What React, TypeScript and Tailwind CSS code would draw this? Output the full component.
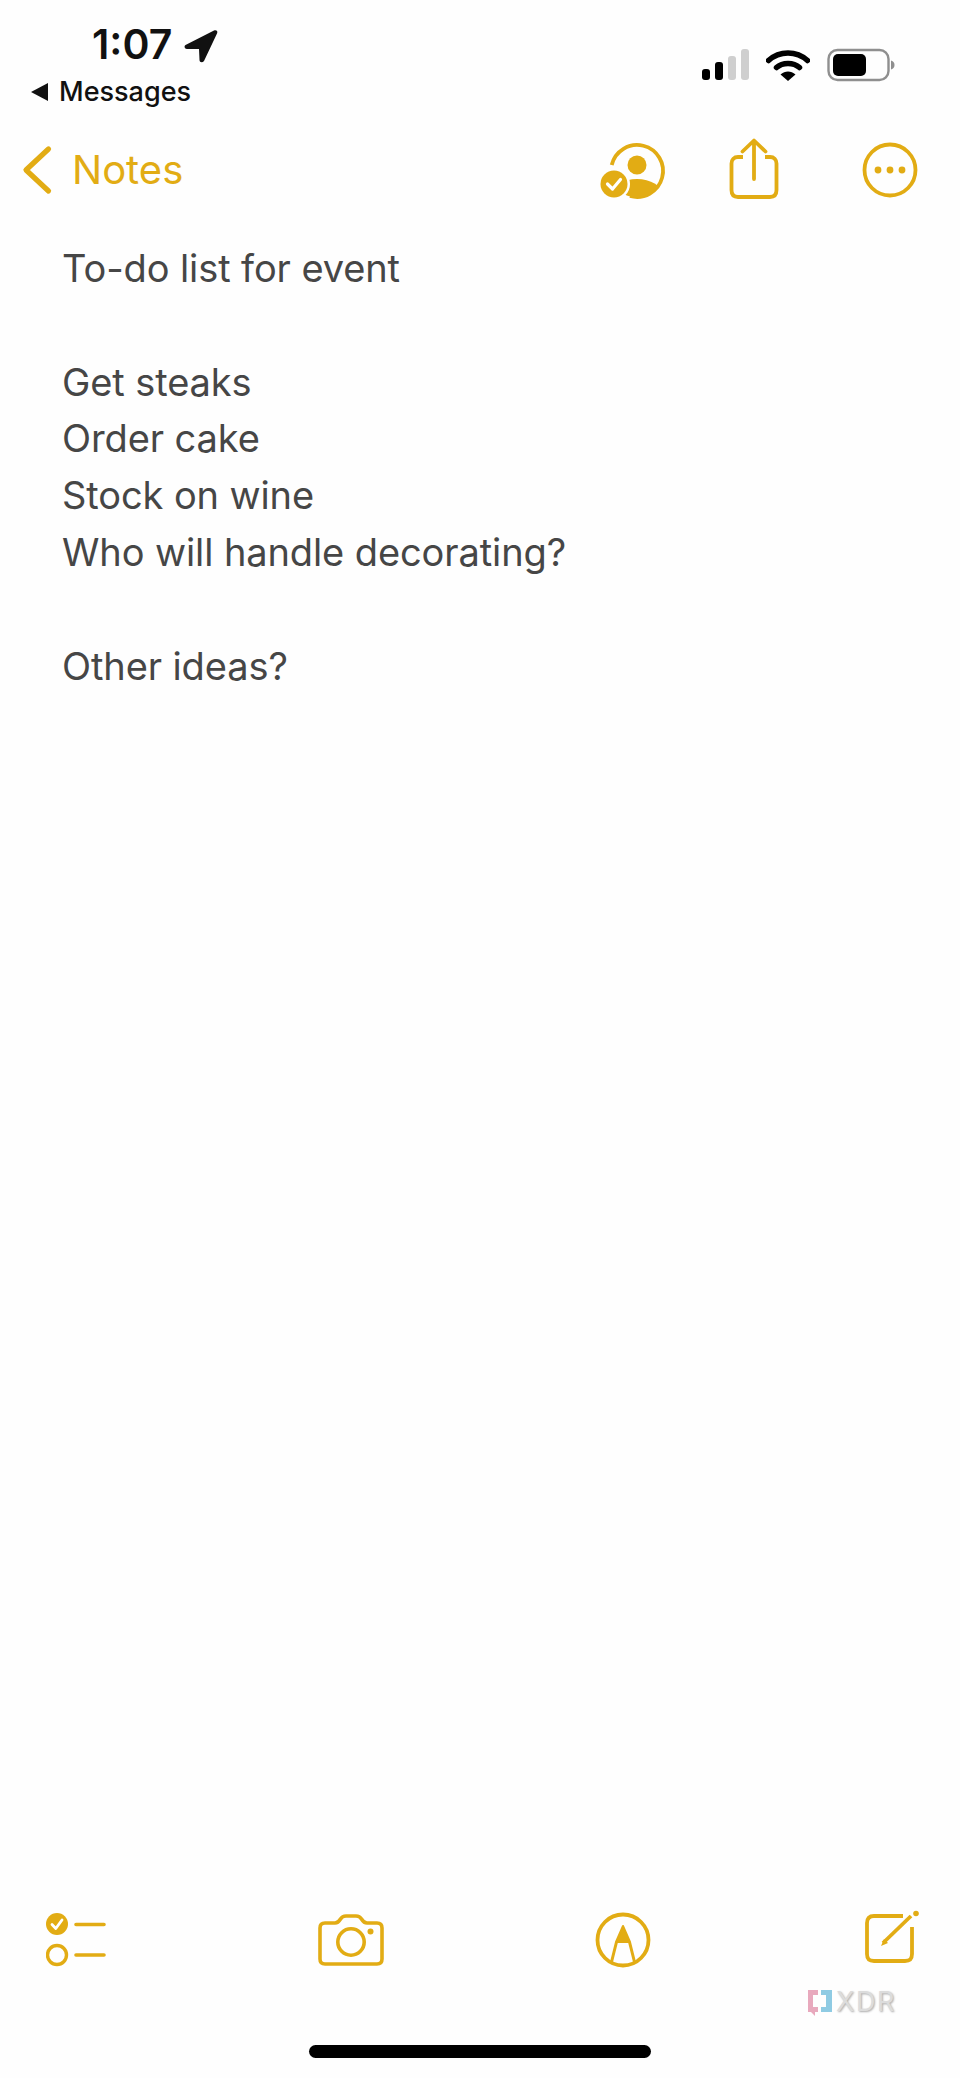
const Y = "#e2ac14";

function Signal() {
  return (
    <svg width="50" height="32" viewBox="0 0 50 32" className="ml-[701px] mt-[3px]">
      <rect x="1" y="20" width="8" height="11" rx="3" fill="#000" />
      <rect x="14" y="13" width="8" height="18" rx="3" fill="#000" />
      <rect x="27" y="7" width="8" height="24" rx="3" fill="#cfcfcf" />
      <rect x="40" y="0" width="8" height="31" rx="3" fill="#cfcfcf" />
    </svg>
  );
}

function Wifi() {
  return (
    <svg width="44" height="32" viewBox="0 0 44 32" className="ml-[15px] mt-[3px]">
      <path d="M2.5 11.5C13.5 1.5 30.5 1.5 41.5 11.5" fill="none" stroke="#000" strokeWidth="5.5" strokeLinecap="round" />
      <path d="M10.5 18.5C16.5 13 27.5 13 33.5 18.5" fill="none" stroke="#000" strokeWidth="5.5" strokeLinecap="round" />
      <path d="M14.5 25.5C19 21.5 25 21.5 29.5 25.5L22 32Z" fill="#000" />
    </svg>
  );
}

function Battery() {
  return (
    <svg width="70" height="34" viewBox="0 0 70 34" className="ml-[17px] mt-[2px]">
      <rect x="1.5" y="2" width="60" height="30" rx="9" fill="none" stroke="#8f8f8f" strokeWidth="2.4" />
      <rect x="6" y="6" width="33" height="22" rx="5" fill="#000" />
      <path d="M64 12.5C66.5 13 67.5 15 67.5 17C67.5 19 66.5 21 64 21.5Z" fill="#8f8f8f" />
    </svg>
  );
}

function Arrow() {
  return (
    <svg width="34" height="34" viewBox="0 0 34 34" className="ml-[12px] mt-[-1px]">
      <path d="M1.500 16L30 1.500C32.500 .6 34 2 33 4.500L20 32C18.500 34 15.500 33.500 15.500 31L15 20L3 20C.4 19.500 -.2 17.200 1.500 16Z" fill="#111" />
    </svg>
  );
}

function Person() {
  return (
    <svg width="68" height="60" viewBox="0 0 68 60">
      <defs>
        <clipPath id="ring">
          <circle cx="37" cy="30" r="26.500" />
        </clipPath>
      </defs>
      <path d="M11.700 24A26 26 0 1 1 30 55" fill="none" stroke={Y} strokeWidth="3.800" />
      <circle cx="37" cy="24" r="9.500" fill={Y} />
      <ellipse cx="37" cy="53" rx="25" ry="15" fill={Y} clipPath="url(#ring)" />
      <circle cx="14" cy="43" r="16" fill="#fefefe" />
      <circle cx="14" cy="43" r="13.500" fill={Y} />
      <path d="M7.500 43L12.500 48L20.500 38.500" fill="none" stroke="#fff" strokeWidth="3.200" strokeLinecap="round" strokeLinejoin="round" />
    </svg>
  );
}

function Share() {
  return (
    <svg width="50" height="62" viewBox="0 0 50 62">
      <path d="M14 19H9C5 19 2.5 21.5 2.5 25.500V52C2.500 56.500 5 59 9 59H41C45 59 47.500 56.500 47.500 52V25.500C47.500 21.500 45 19 41 19H36" fill="none" stroke={Y} strokeWidth="3.800" />
      <path d="M25 41V3M13.500 13.500L25 2.500L36.500 13.500" fill="none" stroke={Y} strokeWidth="3.800" strokeLinecap="round" strokeLinejoin="round" />
    </svg>
  );
}

function More() {
  return (
    <svg width="56" height="56" viewBox="0 0 56 56">
      <circle cx="28" cy="28" r="25.500" fill="none" stroke={Y} strokeWidth="3.800" />
      <circle cx="16" cy="28" r="3.400" fill={Y} />
      <circle cx="28" cy="28" r="3.400" fill={Y} />
      <circle cx="40" cy="28" r="3.400" fill={Y} />
    </svg>
  );
}

function Checklist() {
  return (
    <svg width="60" height="56" viewBox="0 0 60 56">
      <circle cx="11" cy="12" r="11" fill={Y} />
      <path d="M6 12.500L9.800 16.500L16 8" fill="none" stroke="#fff" strokeWidth="2.800" strokeLinecap="round" strokeLinejoin="round" />
      <circle cx="11" cy="43" r="9.500" fill="none" stroke={Y} strokeWidth="3.400" />
      <path d="M30 12.500H58M30 43H58" stroke={Y} strokeWidth="3.600" strokeLinecap="round" />
    </svg>
  );
}

function Camera() {
  return (
    <svg width="66" height="54" viewBox="0 0 66 54">
      <path d="M7 10H17C20 10 21 8.500 22.500 6C24 3.500 25.500 3 28 3H38C40.500 3 42 3.500 43.500 6C45 8.500 46 10 49 10H59C62.500 10 64 12 64 15V46C64 49.500 62.500 51 59 51H7C3.500 51 2 49.500 2 46V15C2 12 3.500 10 7 10Z" fill="none" stroke={Y} strokeWidth="3.600" />
      <circle cx="33" cy="29" r="13.200" fill="none" stroke={Y} strokeWidth="3.600" />
      <circle cx="52.500" cy="18.500" r="3" fill={Y} />
    </svg>
  );
}

function Markup() {
  return (
    <svg width="56" height="56" viewBox="0 0 56 56">
      <circle cx="28" cy="28" r="25.500" fill="none" stroke={Y} strokeWidth="3.800" />
      <path d="M28 14L35 30H21Z" fill={Y} stroke={Y} strokeWidth="2" strokeLinejoin="round" />
      <path d="M21.500 30L16.500 50M34.500 30L39.500 50" fill="none" stroke={Y} strokeWidth="3" />
    </svg>
  );
}

function Compose() {
  return (
    <svg width="56" height="56" viewBox="0 0 56 56">
      <path d="M39 6H10C5 6 3 8.500 3 13V44C3 49 5 51 10 51H41C46 51 48 49 48 44V17" fill="none" stroke={Y} strokeWidth="3.800" />
      <path d="M19 33L47 6" fill="none" stroke={Y} strokeWidth="3.800" />
      <path d="M17 36L20 29L24 33Z" fill={Y} />
      <circle cx="52" cy="3.500" r="2.800" fill={Y} />
    </svg>
  );
}

const lines: [string, string][] = [
  ["To-do list for event", "mb-[57px]"],
  ["Get steaks", ""],
  ["Order cake", ""],
  ["Stock on wine", ""],
  ["Who will handle decorating?", "mb-[57px]"],
  ["Other ideas?", ""],
];

export default function App() {
  return (
    <div className="relative flex h-[2078px] w-[960px] flex-col overflow-hidden bg-[#fefefe] font-['Inter',sans-serif]">
      <div className="flex h-[130px] shrink-0">
        <div className="w-0 shrink-0">
          <div className="flex w-[300px] pl-[92px] pt-[22px]">
            <span className="text-[41px] font-semibold leading-[44px] text-[#111]">1:07</span>
            <span className="mt-[8px]"><Arrow /></span>
          </div>
          <div className="flex w-[300px] items-center pl-[31px] pt-[11px]">
            <span className="h-0 w-0 border-y-[9px] border-r-[17px] border-y-transparent border-r-[#111]" />
            <span className="ml-[11px] text-[27px] font-medium leading-[30px] text-[#111]">Messages</span>
          </div>
        </div>
        <div className="flex pt-[46px]">
          <Signal />
          <Wifi />
          <Battery />
        </div>
      </div>
      <div className="flex h-[80px] shrink-0 items-start">
        <svg width="32" height="50" viewBox="0 0 32 50" className="ml-[21px] mt-[15px]">
          <path d="M27.500 4L5 25L27.500 46" fill="none" stroke={Y} strokeWidth="5.200" strokeLinecap="round" strokeLinejoin="round" />
        </svg>
        <span className="ml-[19px] mt-[16px] w-[115px] text-[40px] leading-[48px] text-[#e2ac14]">Notes</span>
        <div className="ml-[413px] mt-[11px]"><Person /></div>
        <div className="ml-[61px] mt-[8px]"><Share /></div>
        <div className="ml-[83px] mt-[12px]"><More /></div>
      </div>
      <div className="pl-[62px] pt-[30px] text-[38px] leading-[56.700px] tracking-[-0.1px] text-[#464646]">
        {lines.map(([t, m]) => (
          <p key={t} className={m}>{t}</p>
        ))}
      </div>
      <div className="flex-1" />
      <div className="flex h-[60px] shrink-0 items-start pl-[46px]">
        <Checklist />
        <div className="ml-[212px] mt-[1px]"><Camera /></div>
        <div className="ml-[211px]"><Markup /></div>
        <div className="ml-[213px] mt-[-2px]"><Compose /></div>
      </div>
      <div className="flex h-[106px] shrink-0 items-start justify-center pt-[73px]">
        <div className="h-[13px] w-[342px] rounded-full bg-black" />
      </div>
      <div className="absolute left-[806px] top-[1987px] flex items-center">
        <svg width="28" height="30" viewBox="0 0 28 30">
          <path d="M2 3H12V8H7V20H12V25H9V29L5 25H2Z" fill="#e8a9bd" />
          <path d="M15 3H26V25H15V20H20V8H15Z" fill="#8fcbe3" />
        </svg>
        <span className="ml-[2px] text-[27px] font-normal leading-[28px] tracking-[1.500px] text-[#dcdcdc] [text-shadow:1px_1px_2px_#aaaaaa]">XDR</span>
      </div>
    </div>
  );
}
